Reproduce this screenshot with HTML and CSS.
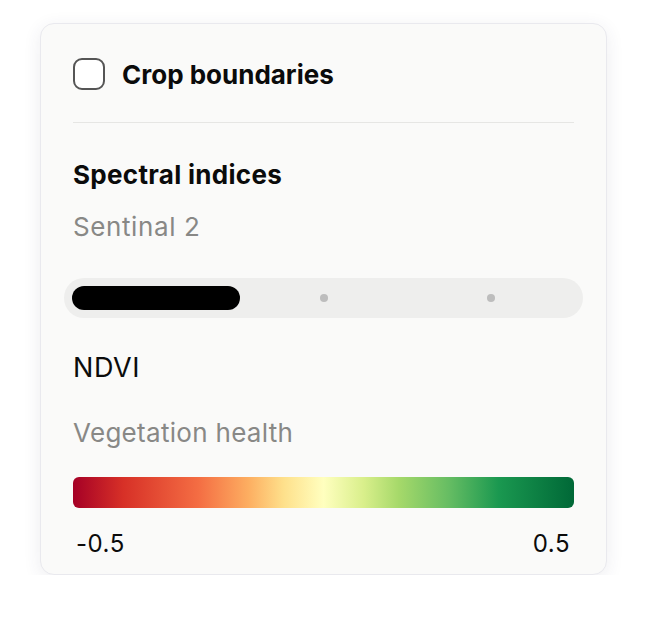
FILE: index.html
```html
<!DOCTYPE html>
<html lang="en">
<head>
    <meta charset="UTF-8">
    <meta name="viewport" content="width=device-width, initial-scale=1.0">
    <title>Layers</title>
    <link rel="stylesheet" href="styles.css">
</head>
<body>
    <div class="layer-card">
        <label class="layer-toggle">
            <span class="checkbox"></span>
            <span class="toggle-label">Crop boundaries</span>
        </label>

        <div class="divider"></div>

        <h2 class="section-title">Spectral indices</h2>
        <p class="section-sub">Sentinal 2</p>

        <div class="segmented">
            <div class="segment active"><span class="pill"></span></div>
            <div class="segment"><span class="dot"></span></div>
            <div class="segment"><span class="dot"></span></div>
        </div>

        <p class="index-name">NDVI</p>
        <p class="index-desc">Vegetation health</p>

        <div class="legend-bar"></div>
        <div class="legend-labels">
            <span>-0.5</span>
            <span>0.5</span>
        </div>
    </div>
</body>
</html>
```

FILE: styles.css
```css
:root {
    --fontFamily: "Inter", "Liberation Sans", Arial, sans-serif;
    --colorText: #0b0b0b;
    --colorMuted: #888886;
    --colorCard: #fafaf9;
    --colorTrack: #eeeeed;
}

body {
    margin: 0;
    background: #ffffff;
    font-family: var(--fontFamily);
    color: var(--colorText);
}

.layer-card {
    box-sizing: border-box;
    width: 567px;
    margin: 23px 0 0 40px;
    padding: 34px 32px 16px;
    background: var(--colorCard);
    border: 1px solid #e9e9ee;
    border-radius: 14px;
    box-shadow: 0 4px 18px rgba(60, 60, 90, 0.09);
}

.layer-toggle {
    display: flex;
    align-items: center;
    gap: 17px;
    height: 32px;
}

.checkbox {
    box-sizing: border-box;
    width: 32px;
    height: 32px;
    border: 2px solid #555555;
    border-radius: 9px;
    background: #fff;
}

.toggle-label {
    font-size: 26px;
    font-weight: 700;
    letter-spacing: 0;
}

.divider {
    height: 1px;
    background: #e6e6e4;
    margin: 32px 0 0;
}

.section-title {
    margin: 36px 0 0;
    font-size: 26px;
    line-height: 32px;
    font-weight: 700;
    letter-spacing: 0.3px;
}

.section-sub {
    margin: 20px 0 0;
    font-size: 26px;
    line-height: 32px;
    letter-spacing: 0.6px;
    color: var(--colorMuted);
}

.segmented {
    display: flex;
    height: 40px;
    margin: 35px -9px 0;
    padding: 0 8px;
    background: var(--colorTrack);
    border-radius: 20px;
}

.segment {
    flex: 1;
    display: flex;
    align-items: center;
    justify-content: center;
}

.pill {
    width: 100%;
    height: 24px;
    background: #000;
    border-radius: 12px;
}

.dot {
    width: 8px;
    height: 8px;
    border-radius: 50%;
    background: #bdbdbd;
}

.index-name {
    margin: 34px 0 0;
    font-size: 27px;
    line-height: 32px;
    letter-spacing: 0.6px;
}

.index-desc {
    margin: 33px 0 0;
    font-size: 26px;
    line-height: 32px;
    letter-spacing: 0.3px;
    color: var(--colorMuted);
}

.legend-bar {
    height: 31px;
    margin: 28px 0 0;
    border-radius: 6px;
    background: linear-gradient(90deg,
        #a50026 0%, #d73027 10%, #f46d43 25%, #fdae61 35%,
        #fee08b 42%, #ffffbf 50%, #d9ef8b 58%, #a6d96a 65%,
        #66bd63 75%, #1a9850 85%, #006837 100%);
}

.legend-labels {
    display: flex;
    justify-content: space-between;
    padding: 0 4px 0 3px;
    margin-top: 22px;
    font-size: 24px;
    line-height: 28px;
    letter-spacing: 0.5px;
}
```
